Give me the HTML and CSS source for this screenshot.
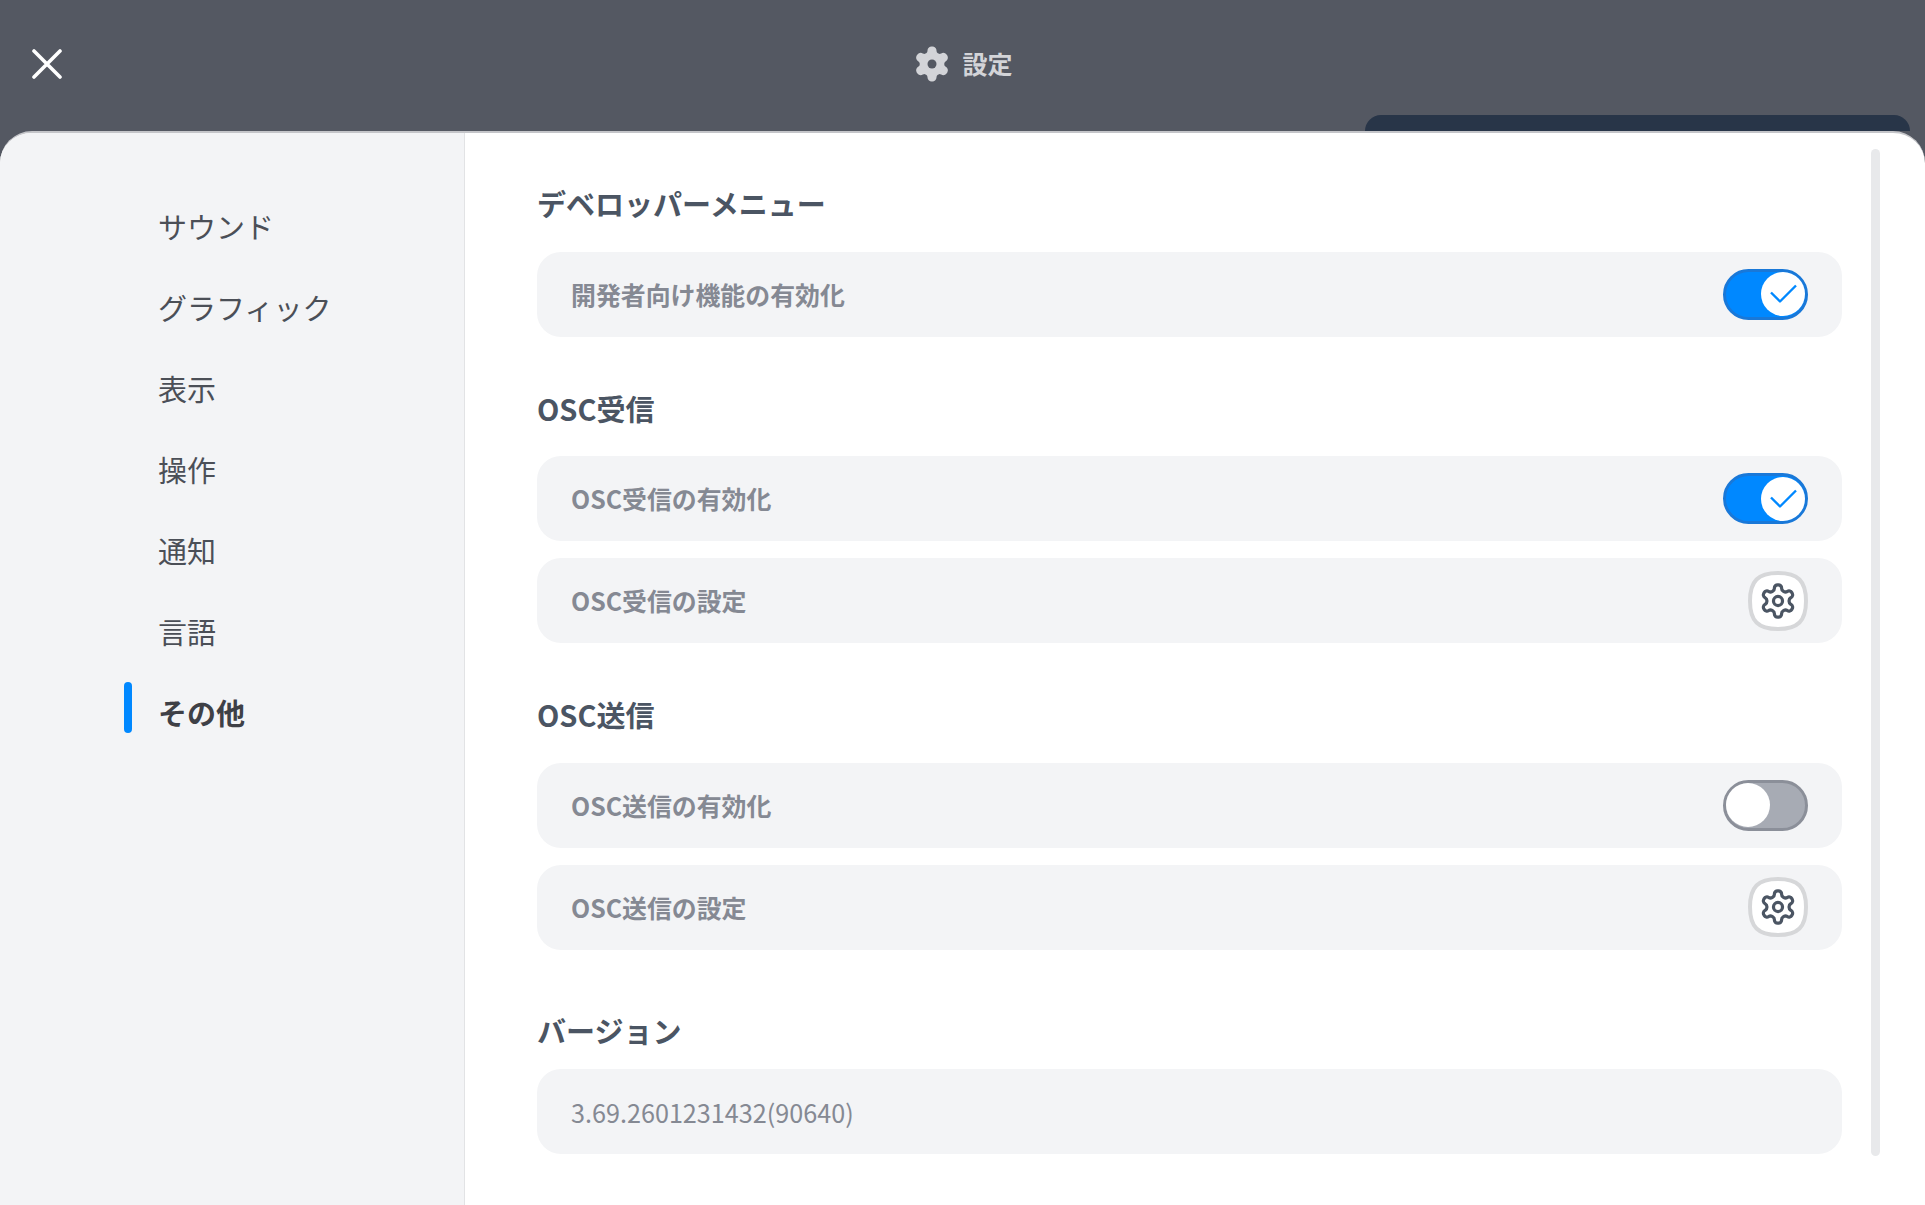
FILE: index.html
```html
<!DOCTYPE html>
<html lang="ja">
<head>
<meta charset="utf-8">
<title>設定</title>
<link rel="stylesheet" href="styles.css">
</head>
<body>
<svg class="defs" width="0" height="0" aria-hidden="true">
  <defs>
    <path id="cog" d="M12.22 2h-.44a2 2 0 0 0-2 2v.18a2 2 0 0 1-1 1.73l-.43.25a2 2 0 0 1-2 0l-.15-.08a2 2 0 0 0-2.73.73l-.22.38a2 2 0 0 0 .73 2.73l.15.1a2 2 0 0 1 1 1.72v.51a2 2 0 0 1-1 1.74l-.15.09a2 2 0 0 0-.73 2.73l.22.38a2 2 0 0 0 2.73.73l.15-.08a2 2 0 0 1 2 0l.43.25a2 2 0 0 1 1 1.73V20a2 2 0 0 0 2 2h.44a2 2 0 0 0 2-2v-.18a2 2 0 0 1 1-1.73l.43-.25a2 2 0 0 1 2 0l.15.08a2 2 0 0 0 2.73-.73l.22-.39a2 2 0 0 0-.73-2.73l-.15-.08a2 2 0 0 1-1-1.74v-.5a2 2 0 0 1 1-1.74l.15-.09a2 2 0 0 0 .73-2.73l-.22-.38a2 2 0 0 0-2.73-.73l-.15.08a2 2 0 0 1-2 0l-.43-.25a2 2 0 0 1-1-1.73V4a2 2 0 0 0-2-2z"/>
    <symbol id="settings-btn" viewBox="0 0 60 60">
      <path class="squircle" d="M30 2C50 2 58 10 58 30S50 58 30 58 2 50 2 30 10 2 30 2Z"/>
      <g transform="translate(10.56 10.56) scale(1.62)">
        <use href="#cog" class="gear-line"/>
        <circle class="gear-line" cx="12" cy="12" r="2.8"/>
      </g>
    </symbol>
    <symbol id="check" viewBox="0 0 30 30">
      <path d="M3 13.500 12 22.500 28 6.500" fill="none" stroke="#0088ff" stroke-width="2.4" stroke-linejoin="round"/>
    </symbol>
  </defs>
</svg>
<div class="app">
  <header class="topbar">
    <button class="close" aria-label="閉じる">
      <svg viewBox="0 0 30 30" width="30" height="30"><path d="M2 2 28 28M28 2 2 28" fill="none" stroke="#fff" stroke-width="3.6" stroke-linecap="round"/></svg>
    </button>
    <div class="title">
      <svg viewBox="0 0 24 24" width="40" height="40"><use href="#cog" class="title-cog"/><circle class="title-hole" cx="12" cy="12" r="2.7"/></svg>
      <span class="title-text">設定</span>
    </div>
    <div class="tab"></div>
  </header>
  <div class="panel">
    <nav class="side">
      <a class="nav-item">サウンド</a>
      <a class="nav-item">グラフィック</a>
      <a class="nav-item">表示</a>
      <a class="nav-item">操作</a>
      <a class="nav-item">通知</a>
      <a class="nav-item">言語</a>
      <a class="nav-item active">その他</a>
    </nav>
    <main class="content">
      <section class="group">
        <h2>デベロッパーメニュー</h2>
        <div class="row"><span class="label">開発者向け機能の有効化</span>
          <span class="toggle on"><span class="knob"><svg width="30" height="30"><use href="#check"/></svg></span></span>
        </div>
      </section>
      <section class="group">
        <h2>OSC受信</h2>
        <div class="row"><span class="label">OSC受信の有効化</span>
          <span class="toggle on"><span class="knob"><svg width="30" height="30"><use href="#check"/></svg></span></span>
        </div>
        <div class="row"><span class="label">OSC受信の設定</span>
          <svg class="gear-btn" width="60" height="60"><use href="#settings-btn"/></svg>
        </div>
      </section>
      <section class="group">
        <h2>OSC送信</h2>
        <div class="row"><span class="label">OSC送信の有効化</span>
          <span class="toggle"><span class="knob"></span></span>
        </div>
        <div class="row"><span class="label">OSC送信の設定</span>
          <svg class="gear-btn" width="60" height="60"><use href="#settings-btn"/></svg>
        </div>
      </section>
      <section class="group group-info">
        <h2>バージョン</h2>
        <div class="row"><span class="version">3.69.2601231432(90640)</span></div>
      </section>
    </main>
    <div class="scrollbar"></div>
  </div>
</div>
</body>
</html>
```
FILE: styles.css
```css
* { box-sizing: border-box; }
html, body { margin: 0; height: 100%; }
body {
  overflow: hidden;
  background: #545862;
  font-family: "Noto Sans CJK JP", "Noto Sans", sans-serif;
}
.defs { position: absolute; }
.app { height: 1205px; display: flex; flex-direction: column; }
.topbar {
  position: relative;
  flex: 0 0 131px;
  display: flex;
  align-items: center;
  justify-content: center;
  background: #545862;
}
.close {
  position: absolute;
  left: 32px;
  top: 49px;
  padding: 0;
  border: 0;
  background: none;
  line-height: 0;
}
.title {
  display: flex;
  align-items: center;
  gap: 10px;
  margin-bottom: 4px;
  color: #d3d4d8;
  font-size: 25px;
  font-weight: 700;
}
.title-text { margin-bottom: 2px; }
.title-cog { fill: #d3d4d8; stroke: #d3d4d8; stroke-width: 1; stroke-linejoin: round; }
.title-hole { fill: #545862; }
.tab {
  position: absolute;
  left: 1365px;
  top: 115px;
  width: 545px;
  height: 16px;
  background: #283548;
  border-radius: 18px 18px 0 0;
}
.panel {
  position: relative;
  flex: 1;
  display: flex;
  background: #fff;
  border-radius: 32px 32px 0 0;
  overflow: hidden;
  border-top: 2px solid #c4c5c9;
}
.side {
  flex: 0 0 465px;
  padding: 53px 0 0 0;
  background: #f3f4f6;
  border-right: 1px solid #e2e3e5;
  display: flex;
  flex-direction: column;
}
.nav-item {
  position: relative;
  height: 81px;
  padding-left: 158px;
  line-height: 80px;
  font-size: 29px;
  color: #4b4f57;
}
.nav-item.active { font-weight: 700; color: #3e4046; }
.nav-item.active::before {
  content: "";
  position: absolute;
  left: 124px;
  top: 10px;
  width: 8px;
  height: 51px;
  border-radius: 4px;
  background: #0088ff;
}
.content {
  flex: 0 0 1377px;
  padding: 48px 0 0 72px;
  display: flex;
  flex-direction: column;
  gap: 49px;
}
.group { display: flex; flex-direction: column; gap: 17px; }
.group h2 {
  margin: 0 0 9.5px;
  height: 44px;
  line-height: 44px;
  font-size: 29px;
  font-weight: 700;
  color: #4b5563;
}
.group-info h2 { margin: 9px 0 0.5px; }
.row {
  height: 85px;
  padding: 0 34px;
  display: flex;
  align-items: center;
  justify-content: space-between;
  background: #f3f4f6;
  border-radius: 24px;
}
.label { margin-bottom: 1px; font-size: 24.9px; font-weight: 700; color: #858993; }
.version { font-size: 25.2px; font-weight: 400; color: #858993; }
.toggle {
  width: 85px;
  height: 51px;
  border: 3.5px solid #8b8f99;
  border-radius: 26px;
  background: #a7abb4;
  display: flex;
  align-items: center;
  justify-content: flex-start;
}
.toggle.on { background: #0088ff; border-color: #1978d8; justify-content: flex-end; }
.knob {
  width: 44px;
  height: 44px;
  border-radius: 50%;
  background: #fff;
  display: flex;
  align-items: center;
  justify-content: center;
  line-height: 0;
}
.squircle { fill: #fff; stroke: #d6d7d9; stroke-width: 4; }
.gear-line { fill: none; stroke: #4b5563; stroke-width: 2; stroke-linecap: round; stroke-linejoin: round; }
.scrollbar {
  position: absolute;
  left: 1871px;
  top: 16px;
  width: 9px;
  height: 1007px;
  background: #e8e9eb;
  border-radius: 5px;
}
```
